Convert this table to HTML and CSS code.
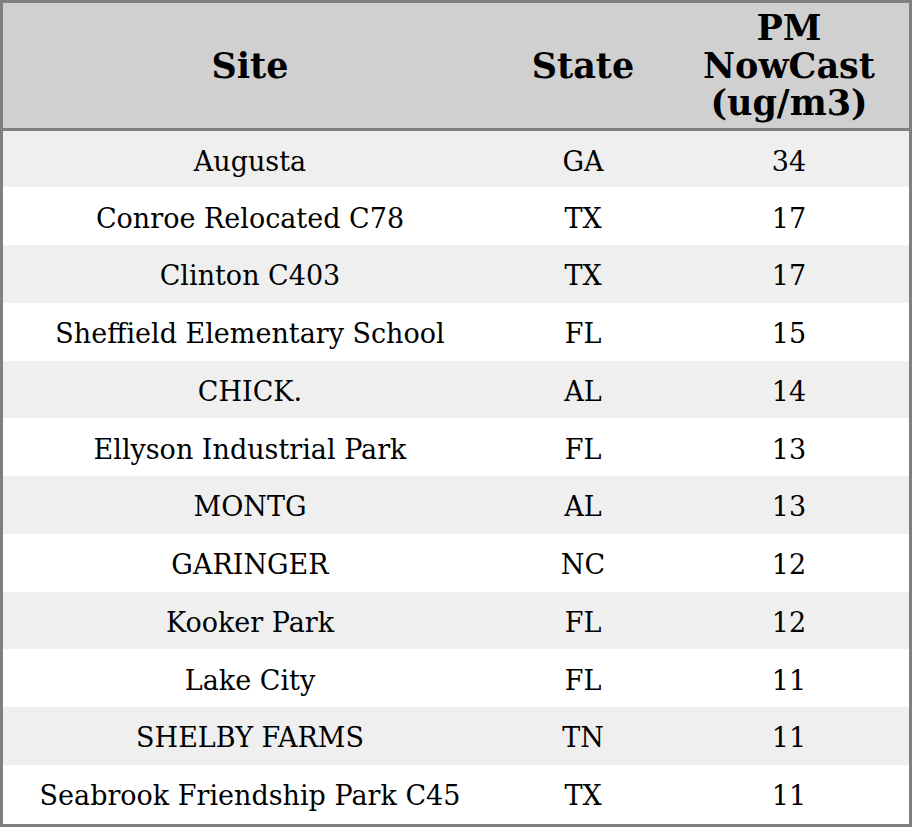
FILE: index.html
```html
<!DOCTYPE html>
<html>
<head>
<meta charset="utf-8">
<link rel="stylesheet" href="styles.css">
</head>
<body>
<div class="frame">
<table class="aq">
<colgroup><col class="c-site"><col class="c-state"><col class="c-pm"></colgroup>
<thead>
<tr><th>Site</th><th>State</th><th>PM<br>NowCast<br>(ug/m3)</th></tr>
</thead>
<tbody>
<tr><td>Augusta</td><td>GA</td><td>34</td></tr>
<tr><td>Conroe Relocated C78</td><td>TX</td><td>17</td></tr>
<tr><td>Clinton C403</td><td>TX</td><td>17</td></tr>
<tr><td>Sheffield Elementary School</td><td>FL</td><td>15</td></tr>
<tr><td>CHICK.</td><td>AL</td><td>14</td></tr>
<tr><td>Ellyson Industrial Park</td><td>FL</td><td>13</td></tr>
<tr><td>MONTG</td><td>AL</td><td>13</td></tr>
<tr><td>GARINGER</td><td>NC</td><td>12</td></tr>
<tr><td>Kooker Park</td><td>FL</td><td>12</td></tr>
<tr><td>Lake City</td><td>FL</td><td>11</td></tr>
<tr><td>SHELBY FARMS</td><td>TN</td><td>11</td></tr>
<tr><td>Seabrook Friendship Park C45</td><td>TX</td><td>11</td></tr>
</tbody>
</table>
</div>
</body>
</html>
```

FILE: styles.css
```css
html, body {
  margin: 0;
  padding: 0;
  background: #ffffff;
}
.frame {
  width: 906px;
  height: 821px;
  border: 3px solid #808080;
  background: #ffffff;
  overflow: hidden;
}
.aq {
  width: 906px;
  border-collapse: collapse;
  table-layout: fixed;
  font-family: "DejaVu Serif", serif;
  color: #000;
}
.c-site { width: 494px; }
.c-state { width: 172px; }
.c-pm { width: 240px; }
.aq th {
  background: #d0d0d0;
  font-size: 35px;
  font-weight: bold;
  line-height: 37.5px;
  height: 125px;
  padding: 0;
  text-align: center;
  vertical-align: middle;
  border-bottom: 3px solid #808080;
}
.aq td {
  font-size: 27px;
  height: 57.75px;
  padding: 4px 0 0 0;
  box-sizing: border-box;
  text-align: center;
  vertical-align: middle;
}
.aq tbody tr:nth-child(odd) td {
  background: #efefef;
}
```
